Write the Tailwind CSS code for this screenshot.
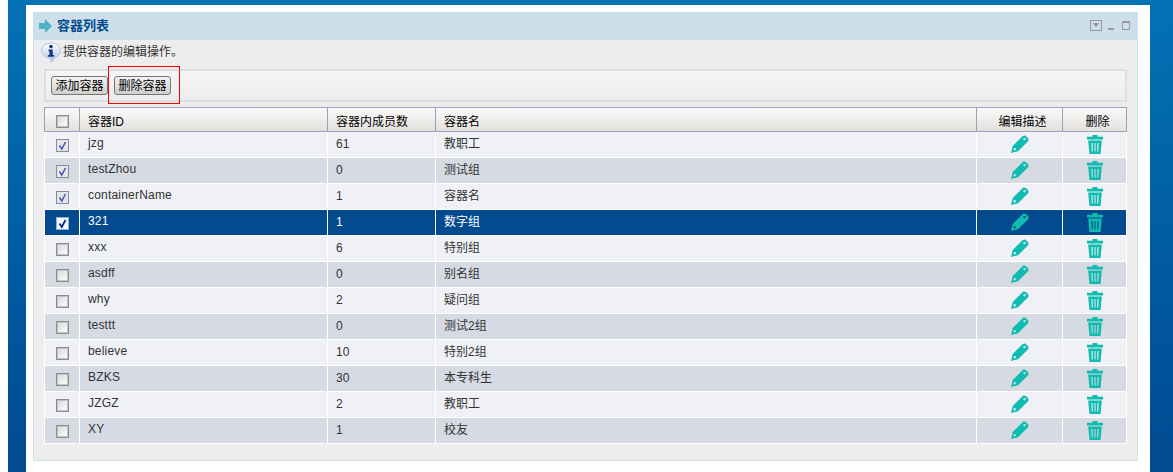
<!DOCTYPE html>
<html lang="zh">
<head>
  <meta charset="UTF-8" />
  <title>容器列表</title>
  <script src="https://cdn.jsdelivr.net/npm/@tailwindcss/browser@4"></script>
</head>
<body class="h-[472px] overflow-hidden bg-white pl-2 font-['Liberation_Sans','Noto_Sans_CJK_SC',sans-serif] text-xs text-[#333]">
  <div class="h-[472px] bg-gradient-to-b from-[#0372b4] to-[#024a92] px-[18px] pt-[5px] pr-[23px]">
    <div class="h-[467px] bg-white px-[7px] pt-[7px] pr-[12px]">
      <div class="h-[449px] border-x border-b border-[#cddfeb] bg-[#ededed]">
        <div class="flex h-[28px] items-center bg-[#cddfeb] pl-[5px] pr-[7px]">
          <svg class="h-[14px] w-[14px]" viewBox="0 0 14 14"><path d="M0 4h6V0l7 7-7 7v-4H0z" fill="#4fb1c4"/></svg>
          <span class="ml-[4px] text-[13px] font-bold text-[#034a8f]">容器列表</span>
          <div class="mb-[2px] ml-auto flex items-center">
            <svg class="h-[11px] w-[12px]" viewBox="0 0 12 11"><rect x=".5" y=".5" width="11" height="10" fill="none" stroke="#999"/><path d="M2.500 3h7L6 7z" fill="#999"/></svg>
            <span class="ml-[6px] mt-[7px] h-[2px] w-[6px] bg-[#999]"></span>
            <span class="ml-[8px] h-[9px] w-[8px] border border-t-2 border-[#999]"></span>
          </div>
        </div>
        <div class="flex h-[23px] items-center pl-[7px]">
          <svg class="h-[20px] w-[20px]" viewBox="0 0 20 20">
            <defs><linearGradient id="gloss" x1="0" y1="0" x2="0" y2="1"><stop offset="0" stop-color="#ffffff"/><stop offset="1" stop-color="#a9c3e6"/></linearGradient></defs>
            <path d="M10 1c5 0 9.500 3 9.500 7.500 0 3.500-2.500 6-5.500 7L10.500 20l-1-3.800C4.500 16 .5 13 .5 8.500S5 1 10 1z" fill="url(#gloss)" stroke="#aec4e2"/>
            <circle cx="10" cy="4.500" r="1.800" fill="#13337f"/>
            <path d="M7.500 7.500h4.200V13H13v1.800H7.200V13h1.300V9.200h-1z" fill="#13337f"/>
          </svg>
          <span class="ml-[2px] text-[12px] text-[#333]">提供容器的编辑操作。</span>
        </div>
        <div class="relative mx-[10px] mt-[6px] flex h-[33px] w-[1083px] items-center border-2 border-[#dedede] bg-gradient-to-b from-[#f6f6f6] to-[#ececec] pl-[5px]">
          <button class="h-[19px] w-[57px] rounded-[3px] border border-[#777] bg-gradient-to-b from-[#f3f3f3] to-[#cfcfcb] text-[12px] text-black">添加容器</button>
          <button class="ml-[6px] h-[19px] w-[57px] rounded-[3px] border border-[#777] bg-gradient-to-b from-[#f3f3f3] to-[#cfcfcb] text-[12px] text-black">删除容器</button>
          <div class="absolute left-[62px] top-[-5px] h-[38px] w-[72px] border border-[#f00]"></div>
        </div>
        <table class="mx-[10px] mt-[5px] w-[1083px] table-fixed border-collapse">
          <thead>
            <tr class="h-[24px] bg-gradient-to-b from-[#fafafa] to-[#e2e0dc] text-[12px] font-normal text-black">
              <th class="w-[35px] border border-[#9ca3b8] pt-[3px]"><span class="mx-auto block h-[13px] w-[13px] border border-[#8c8c8c] bg-gradient-to-br from-[#d8d8d8] to-white shadow-[inset_0_0_0_1px_#c4c4c4]"></span></th>
              <th class="w-[248px] border border-[#9ca3b8] pl-[8px] pt-[4px] text-left font-normal">容器ID</th>
              <th class="w-[108px] border border-[#9ca3b8] pl-[8px] pt-[4px] text-left font-normal">容器内成员数</th>
              <th class="border border-[#9ca3b8] pl-[8px] pt-[4px] text-left font-normal">容器名</th>
              <th class="w-[86px] border border-[#9ca3b8] pl-[6px] pt-[4px] font-normal">编辑描述</th>
              <th class="w-[64px] border border-[#9ca3b8] pl-[6px] pt-[4px] font-normal">删除</th>
            </tr>
          </thead>
          <tbody id="rows"></tbody>
        </table>
      </div>
    </div>
  </div>
  <script>
    const data = [
      ["jzg", 61, "教职工", true], ["testZhou", 0, "测试组", true], ["containerName", 1, "容器名", true],
      ["321", 1, "数字组", true, true], ["xxx", 6, "特别组"], ["asdff", 0, "别名组"], ["why", 2, "疑问组"],
      ["testtt", 0, "测试2组"], ["believe", 10, "特别2组"], ["BZKS", 30, "本专科生"], ["JZGZ", 2, "教职工"], ["XY", 1, "校友"]
    ];
    // the dots and slits are holes, so the row colour shows through them
    const pen = '<svg class="mx-auto mb-[2px] block h-[18px] w-[18px]" viewBox="0 0 18 18"><path fill-rule="evenodd" fill="#0fbcb0" d="M11.500 1.200c1-1 2.600-1 3.600 0l1.700 1.700c1 1 1 2.600 0 3.600L7 16.300 0 18l1.700-7zM13.500 3a1.200 1.200 0 1 0 .01 0zM3.700 13a1.200 1.200 0 1 0 .01 0z"/></svg>';
    const bin = '<svg class="mx-auto block h-[19px] w-[16px]" viewBox="0 0 16 19"><path fill="#0fbcb0" d="M5.500 0h5v1.800H16v2.700H0V1.800h5.500z"/><path fill-rule="evenodd" fill="#0fbcb0" d="M1.200 5.500h13.600L13.500 19h-11zM4.300 8l.5 8.500h1L5.500 8zM7.500 8v8.500h1V8zM10.500 8l-.3 8.500h1l.5-8.500z"/></svg>';
    document.getElementById("rows").innerHTML = data.map((r, i) => {
      const bg = r[4] ? "bg-[#034a8f] text-white" : i % 2 ? "bg-[#d6dae3] text-[#333]" : "bg-[#eff1f6] text-[#333]";
      let box = '<span class="mx-auto block h-[13px] w-[13px] border border-[#8c8c8c] bg-gradient-to-br from-[#d8d8d8] to-white shadow-[inset_0_0_0_1px_#c4c4c4]"></span>';
      if (r[4]) box = '<svg class="mx-auto block h-[13px] w-[13px]" viewBox="0 0 13 13"><rect x=".5" y=".5" width="12" height="12" fill="#f4f7fc" stroke="#8fb2d6"/><path d="M3.500 6.500 5.800 10l3.700-7" fill="none" stroke="#0a2a8c" stroke-width="1.800"/></svg>';
      else if (r[3]) box = '<svg class="mx-auto block h-[13px] w-[13px]" viewBox="0 0 13 13"><rect x=".5" y=".5" width="12" height="12" fill="#e4e6ee" stroke="#8c8c8c"/><path d="M3.500 6.500 5.800 10l3.700-7" fill="none" stroke="#4a5aa8" stroke-width="1.600"/></svg>';
      return `<tr class="h-[26px] ${bg}">
        <td class="border border-white pt-[1px]">${box}</td>
        <td class="border border-white pb-[3px] pl-[8px] tracking-[0.2px]">${r[0]}</td>
        <td class="border border-white pb-[1px] pl-[8px]">${r[1]}</td>
        <td class="border border-white pb-[1px] pl-[8px]">${r[2]}</td>
        <td class="border border-white">${pen}</td>
        <td class="border border-white">${bin}</td>
      </tr>`;
    }).join("");
  </script>
</body>
</html>
